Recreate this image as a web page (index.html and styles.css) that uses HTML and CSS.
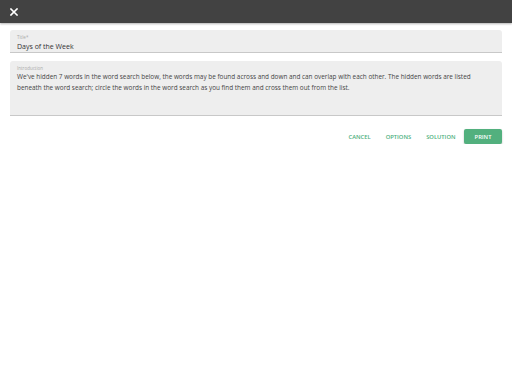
FILE: index.html
```html
<!DOCTYPE html>
<html lang="en">
<head>
    <meta charset="UTF-8">
    <title>Word Search</title>
    <link rel="stylesheet" href="styles.css">
</head>
<body>
    <div class="toolbar">
        <button class="close-btn" aria-label="Close">
            <svg width="8" height="8" viewBox="0 0 8 8">
                <path d="M1 1L7 7M7 1L1 7" stroke="#fff" stroke-width="1.6" stroke-linecap="square"/>
            </svg>
        </button>
    </div>
    <div class="content">
        <div class="field title-field">
            <label>Title*</label>
            <div class="value">Days of the Week</div>
        </div>
        <div class="field intro-field">
            <label>Introduction</label>
            <div class="value">We've hidden 7 words in the word search below, the words may be found across and down and can overlap with each other. The hidden words are listed beneath the word search; circle the words in the word search as you find them and cross them out from the list.</div>
        </div>
        <div class="actions">
            <button class="text-btn">CANCEL</button>
            <button class="text-btn">OPTIONS</button>
            <button class="text-btn">SOLUTION</button>
            <button class="print-btn">PRINT</button>
        </div>
    </div>
</body>
</html>
```
FILE: styles.css
```css
body {
    margin: 0;
    font-family: "Open Sans", "Noto Sans", sans-serif;
    background: #fff;
    color: #333;
}
.toolbar {
    height: 23px;
    background: #424242;
    display: flex;
    align-items: center;
    padding-left: 10px;
    box-shadow: 0 1px 2px rgba(0, 0, 0, 0.3);
}
.close-btn {
    background: none;
    border: none;
    padding: 0;
    width: 8px;
    height: 8px;
    display: flex;
}
.content {
    padding: 7px 10px 0 10px;
}
.field {
    background: #eeeeee;
    border-radius: 3px 3px 0 0;
    border-bottom: 1px solid #c8c8c8;
    padding: 4px 7px 0 7px;
    margin-bottom: 8px;
}
.field label {
    display: block;
    font-size: 4.5px;
    color: #aaa;
    line-height: 7px;
}
.title-field {
    height: 18px;
}
.title-field .value {
    font-size: 7px;
    line-height: 11px;
    color: #333;
}
.intro-field {
    height: 50px;
}
.intro-field .value {
    font-size: 6.4px;
    line-height: 10.5px;
    color: #444;
}
.actions {
    display: flex;
    justify-content: flex-end;
    align-items: center;
    margin-top: 13px;
}
.text-btn {
    background: none;
    border: none;
    font-family: inherit;
    font-size: 5.8px;
    font-weight: 600;
    color: #4caf7d;
    padding: 0 7.5px;
    height: 15px;
}
.print-btn {
    background: #52b07e;
    border: none;
    border-radius: 2px;
    color: #fff;
    font-family: inherit;
    font-size: 5.8px;
    font-weight: 600;
    width: 38px;
    height: 15px;
    margin-left: 1px;
    box-shadow: 0 1px 2px rgba(0, 0, 0, 0.25);
}
```
